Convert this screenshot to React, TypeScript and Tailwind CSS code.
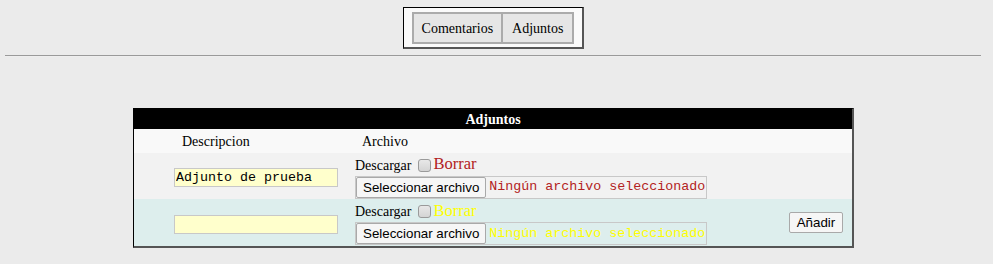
import React from "react";

const serif = "font-['Liberation_Serif',serif]";
const mono = "font-['Liberation_Mono',monospace]";
const sans = "font-['Liberation_Sans',Arial,sans-serif]";

function FileRow({ color }: { color: string }) {
  return (
    <div className="flex flex-col items-start">
      <div className="flex items-end h-[19px]">
        <span className="text-[14px] leading-none text-black">Descargar</span>
        <span className="ml-[6px] mr-[3px] mb-[1px] w-[13px] h-[13px] rounded-[3px] border border-[#9a9a9a] bg-gradient-to-b from-[#e8e8e8] to-[#d4d4d4]" />
        <span className={`text-[16.5px] leading-none ${color}`}>Borrar</span>
      </div>
      <div className="flex items-center mt-[3px] border border-[#c8c8c8] h-[23px]">
        <button
          className={`${sans} text-[13.33px] text-black h-[21px] px-[6px] border border-[#a9a9a9] bg-[#f6f6f6] rounded-[2px]`}
        >
          Seleccionar archivo
        </button>
        <span className={`${mono} text-[13.33px] ml-[3px] pr-[1px] ${color}`}>
          Ningún archivo seleccionado
        </span>
      </div>
    </div>
  );
}

export default function App() {
  return (
    <div className={`min-h-[264px] bg-[#ebebeb] ${serif} text-black`}>
      <div className="flex justify-center pt-[7px] pr-[6px]">
        <div className="flex bg-[#fafafa] border-l border-t border-black border-r-2 border-b-2 border-r-[#555] border-b-[#555] pl-[8px] pr-[8px] pt-[4px] pb-[3px]">
          <div className="flex border-2 border-[#ababab] bg-[#e6e6e6] text-[14px]">
            <div className="h-[28px] flex items-center px-[8px]">Comentarios</div>
            <div className="h-[28px] flex items-center px-[9px] border-l-2 border-[#ababab]">Adjuntos</div>
          </div>
        </div>
      </div>

      <hr className="mt-[6px] ml-[5px] mr-[12px] border-0 border-t border-t-[#9a9a9a] border-b border-b-[#eeeeee]" />

      <div className="ml-[133px] mt-[51px] w-[721px] border-l border-t border-black border-r-2 border-b-2 border-r-[#555] border-b-[#555] bg-[#f9f9f9]">
        <div className="h-[20px] bg-black text-white font-bold text-[14px] flex items-center justify-center">
          Adjuntos
        </div>
        <div className="h-[24px] flex items-center text-[14px]">
          <div className="w-[221px] pl-[48px]">Descripcion</div>
          <div className="pl-[7px]">Archivo</div>
        </div>
        <div className="h-[46px] bg-[#f2f2f2] flex items-center">
          <div className="w-[221px] pl-[40px]">
            <input
              readOnly
              value="Adjunto de prueba"
              className={`${mono} text-[13.33px] w-[164px] h-[19px] bg-[#ffffcc] border border-[#c8c8c8] px-[1px] outline-none`}
            />
          </div>
          <FileRow color="text-[#b22222]" />
        </div>
        <div className="h-[47px] bg-[#ddeeed] flex items-center">
          <div className="w-[221px] pl-[40px]">
            <input
              readOnly
              value=""
              className={`${mono} text-[13.33px] w-[164px] h-[19px] bg-[#ffffcc] border border-[#c8c8c8] px-[1px] outline-none`}
            />
          </div>
          <FileRow color="text-[#ffff00]" />
          <div className="flex-1 flex justify-end pr-[9px]">
            <button className={`${sans} text-[13.33px] text-black h-[21px] w-[54px] border border-[#a9a9a9] bg-[#f6f6f6] rounded-[2px]`}>
              Añadir
            </button>
          </div>
        </div>
      </div>
    </div>
  );
}
